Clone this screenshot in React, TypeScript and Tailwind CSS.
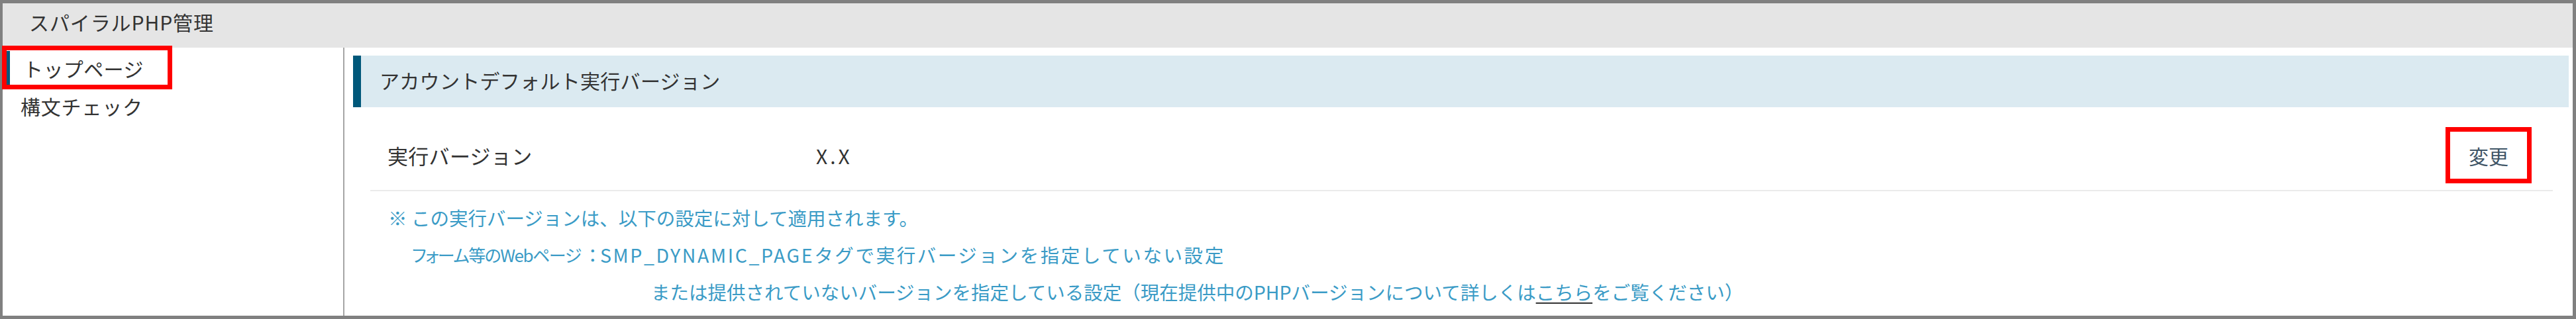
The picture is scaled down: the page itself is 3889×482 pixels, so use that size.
import React from "react";

export default function App() {
  const font = { fontFamily: '"Noto Sans CJK JP", "Noto Sans", sans-serif' };
  return (
    <div
      className="relative w-[3889px] h-[482px] box-border border-[5px] border-l-4 border-[#808080] bg-white flex flex-col text-[#333333]"
      style={font}
    >
      {/* title bar */}
      <div className="h-[67px] shrink-0 bg-[#e5e5e5] flex items-center pl-[40px] pb-[11px] text-[30px] tracking-[0.9px] leading-none">
        スパイラルPHP管理
      </div>

      <div className="flex flex-1 min-h-0">
        {/* sidebar */}
        <div className="w-[516px] shrink-0 border-r-2 border-[#a5a5a5] pt-[5px] flex flex-col gap-[6px]">
          <div className="ml-[5px] h-[51px] border-l-[6px] border-[#00587a] flex items-center pl-[20px] text-[30px] tracking-[0.4px] leading-none">
            トップページ
          </div>
          <div className="ml-[5px] h-[51px] flex items-center pl-[22px] text-[30px] tracking-[0.8px] leading-none">
            構文チェック
          </div>
        </div>

        {/* main */}
        <div className="flex-1 min-w-0 pt-[12px] pl-[13px] pr-[6px]">
          <div className="h-[78px] bg-[#dbeaf1] border-l-[12px] border-[#00587a] flex items-center pl-[28px] pb-[4px] text-[30px] tracking-[0.3px] leading-none">
            アカウントデフォルト実行バージョン
          </div>

          <div className="mt-[20px] mx-[26px] mr-[24px] h-[107px] border-b-2 border-[#ebebeb] flex items-center pl-[26px] text-[31px] leading-none">
            <div className="w-[647px] shrink-0 tracking-[0.3px]">実行バージョン</div>
            <div className="flex-1 text-[30px] tracking-[4px]">X.X</div>
            <div className="mr-[32px] w-[130px] h-[85px] border-[7px] border-[#ff0000] flex items-center justify-center text-[30px] text-[#3f5566]">
              変更
            </div>
          </div>

          <div className="pl-[53px] pt-[12px] text-[28.5px] leading-none text-[#3a9bc6]">
            <div className="h-[56px] flex items-center">※ この実行バージョンは、以下の設定に対して適用されます。</div>
            <div className="h-[56px] flex items-center pl-[36px]">
              <span className="w-[284px] shrink-0 flex items-center whitespace-nowrap">
                <span className="text-[26px] tracking-[-1.5px] [font-feature-settings:'palt']">フォーム等のWebページ</span>
                <span className="ml-[4px]">：</span>
              </span>
              <span className="whitespace-nowrap tracking-[2.6px]">SMP_DYNAMIC_PAGEタグで実行バージョンを指定していない設定</span>
            </div>
            <div className="h-[56px] flex items-center pl-[397px]">
              <span className="whitespace-nowrap">
                または提供されていないバージョンを指定している設定（現在提供中のPHPバージョンについて詳しくは
                <span className="underline decoration-[#333333] decoration-2 underline-offset-4">こちら</span>
                をご覧ください）
              </span>
            </div>
          </div>
        </div>
      </div>

      {/* annotation box over the active sidebar item */}
      <div className="absolute left-[-1px] top-[64px] w-[257px] h-[66px] border-[7px] border-[#ff0000] pointer-events-none" />
    </div>
  );
}
